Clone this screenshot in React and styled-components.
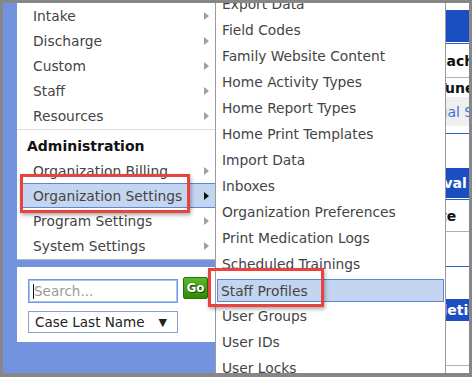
import React from 'react';
import styled, { createGlobalStyle } from 'styled-components';

const GlobalStyle = createGlobalStyle`
  html, body { margin: 0; padding: 0; background: #878787; }
  body { font-family: "DejaVu Sans", Verdana, sans-serif; }
`;

const mainItems = ['Intake', 'Discharge', 'Custom', 'Staff', 'Resources'];
const adminItems = ['Organization Billing', 'Organization Settings', 'Program Settings', 'System Settings'];
const subItems = [
  'Export Data', 'Field Codes', 'Family Website Content', 'Home Activity Types',
  'Home Report Types', 'Home Print Templates', 'Import Data', 'Inboxes',
  'Organization Preferences', 'Print Medication Logs', 'Scheduled Trainings',
  'Staff Profiles', 'User Groups', 'User IDs', 'User Locks',
];

function App () {
  return (
    <>
      <GlobalStyle />
      <Frame>
        <Inner>
          <Sidebar>
            <Menu>
              {mainItems.map(item => (
                <MenuItem key={item}>
                  <span>{item}</span>
                  <Arrow />
                </MenuItem>
              ))}
              <Separator />
              <MenuHeading>Administration</MenuHeading>
              {adminItems.map(item => (
                <MenuItem key={item} $active={item === 'Organization Settings'}>
                  <span>{item}</span>
                  <Arrow $active={item === 'Organization Settings'} />
                </MenuItem>
              ))}
            </Menu>

            <SearchPanel>
              <SearchRow>
                <SearchField>
                  <SearchInput placeholder="Search..." />
                </SearchField>
                <GoButton>Go</GoButton>
              </SearchRow>
              <SelectBox>
                <span>Case Last Name</span>
                <span>▼</span>
              </SelectBox>
            </SearchPanel>
          </Sidebar>

          <Content>
            <Spacer $h={7} />
            <HeaderBar $h={32} />
            <BlueLine />
            <Cell $h={33} $bold>Each</Cell>
            <GrayLine />
            <Cell $h={19} $bold>Tuner</Cell>
            <LinkCell $shift={-28}>Manual Services</LinkCell>
            <Spacer $h={6} />
            <BlueLine />
            <Spacer $h={34} />
            <HeaderBar $h={30} $shift={-41}>Approval</HeaderBar>
            <BlueLine />
            <Cell $h={31} $bold $shift={-18}>Date</Cell>
            <GrayLine />
            <Spacer $h={33} />
            <BlueLine />
            <Spacer $h={32} />
            <HeaderBar $h={22} $shift={-39}>Completion</HeaderBar>
            <Spacer $h={44} />
            <GrayLine />
          </Content>

          <SubMenu>
            {subItems.map(item => (
              <SubItem key={item} $active={item === 'Staff Profiles'}>{item}</SubItem>
            ))}
          </SubMenu>

          <Callout $left={17} $top={171} $w={170} $h={39} />
          <Callout $left={205} $top={265} $w={116} $h={39} />
        </Inner>
      </Frame>
    </>
  );
}

export default App;

const Frame = styled.div`
  width: 472px;
  height: 377px;
  box-sizing: border-box;
  border-style: solid;
  border-color: #878787;
  border-width: 3px 3px 4px 3px;
  background: #878787;
`;

const Inner = styled.div`
  position: relative;
  display: flex;
  height: 100%;
  overflow: hidden;
  background: #fff;
`;

const Sidebar = styled.div`
  width: 227px;
  flex-shrink: 0;
  background: #7393e0;
  padding-left: 14px;
  box-sizing: border-box;
  display: flex;
  flex-direction: column;
`;

const Menu = styled.div`
  width: 198px;
  background: #fff;
  border-bottom: 1px solid #b8b8b8;
  padding-bottom: 1px;
`;

const MenuItem = styled.div`
  height: 25px;
  box-sizing: border-box;
  display: flex;
  align-items: center;
  justify-content: space-between;
  padding: 0 6px 0 16px;
  font-size: 13.8px;
  color: #444;
  margin-left: ${p => (p.$active ? '3px' : '0')};
  padding-left: ${p => (p.$active ? '13px' : '16px')};
  background: ${p => (p.$active ? '#c4d5ef' : 'transparent')};
  border-top: 1px solid ${p => (p.$active ? '#5d86d6' : 'transparent')};
  border-bottom: 1px solid ${p => (p.$active ? '#5d86d6' : 'transparent')};
`;

const Arrow = styled.span`
  width: 0;
  height: 0;
  border-top: 4px solid transparent;
  border-bottom: 4px solid transparent;
  border-left: 5px solid ${p => (p.$active ? '#111' : '#a0a0a0')};
`;

const Separator = styled.div`
  height: 1px;
  margin-top: 1px;
  background: #dcdcdc;
`;

const MenuHeading = styled.div`
  height: 28px;
  padding: 4px 0 0 10px;
  box-sizing: border-box;
  display: flex;
  align-items: center;
  font-size: 14px;
  font-weight: bold;
  color: #111;
`;

const SearchPanel = styled.div`
  margin-top: 7px;
  background: #fff;
  height: 75px;
  box-sizing: border-box;
  padding: 12px 0 0 11px;
  display: flex;
  flex-direction: column;
  gap: 8px;
`;

const SearchRow = styled.div`
  display: flex;
  align-items: flex-start;
  gap: 5px;
`;

const SearchField = styled.div`
  position: relative;

  &::after {
    content: "";
    position: absolute;
    left: 5px;
    top: 5px;
    width: 1px;
    height: 15px;
    background: #111;
  }
`;

const SearchInput = styled.input`
  display: block;
  width: 150px;
  height: 24px;
  box-sizing: border-box;
  border: 1px solid #6f9be6;
  box-shadow: inset 0 0 0 1px #a9c4f0;
  outline: none;
  padding: 0 5px;
  font-family: "DejaVu Sans", Verdana, sans-serif;
  font-size: 13.5px;
  color: #333;
  &::placeholder { color: #9a9a9a; }
`;

const GoButton = styled.button`
  width: 25px;
  height: 22px;
  margin-top: -2px;
  padding: 0;
  box-sizing: border-box;
  border: 1px solid #2e6f06;
  border-radius: 2px;
  background: linear-gradient(#58bb2c, #2f8a08);
  color: #fff;
  font-family: "DejaVu Sans", Verdana, sans-serif;
  font-size: 12px;
  font-weight: bold;
  text-shadow: 0 0 1px #0c3a00, 1px 1px 0 #1a4a00;
`;

const SelectBox = styled.div`
  width: 150px;
  height: 22px;
  box-sizing: border-box;
  border: 1px solid #8aa0c2;
  display: flex;
  align-items: center;
  justify-content: space-between;
  padding: 0 10px 0 6px;
  font-size: 13.5px;
  color: #222;

  span:last-child {
    font-size: 11px;
  }
`;

const Content = styled.div`
  flex: 1;
  display: flex;
  flex-direction: column;
  padding-left: 207px;
  background: #fff;
  white-space: nowrap;
  overflow: hidden;
`;

const Spacer = styled.div`
  height: ${p => p.$h}px;
  flex-shrink: 0;
`;

const HeaderBar = styled.div`
  height: ${p => p.$h}px;
  flex-shrink: 0;
  background: #1b4ec0;
  color: #fff;
  font-weight: bold;
  font-size: 14px;
  display: flex;
  align-items: center;
  text-indent: ${p => p.$shift || 0}px;
`;

const BlueLine = styled.div`
  height: 1px;
  margin-top: 1px;
  flex-shrink: 0;
  background: #2f5fc8;
`;

const GrayLine = styled.div`
  height: 1px;
  flex-shrink: 0;
  background: #b0b0b0;
`;

const Cell = styled.div`
  height: ${p => p.$h}px;
  flex-shrink: 0;
  display: flex;
  align-items: center;
  font-size: 14px;
  font-weight: ${p => (p.$bold ? 'bold' : 'normal')};
  color: #111;
  text-indent: ${p => p.$shift || 0}px;
`;

const LinkCell = styled.div`
  height: 29px;
  flex-shrink: 0;
  background: #efefef;
  color: #3e6fd6;
  font-size: 14px;
  display: flex;
  align-items: center;
  text-indent: ${p => p.$shift || 0}px;
`;

const SubMenu = styled.div`
  position: absolute;
  left: 212px;
  top: -12px;
  width: 231px;
  box-sizing: border-box;
  background: #fff;
  border-left: 1px solid #9a9a9a;
  border-right: 1px solid #9a9a9a;
`;

const SubItem = styled.div`
  box-sizing: border-box;
  display: flex;
  align-items: center;
  font-size: 13.8px;
  color: #444;
  padding-left: ${p => (p.$active ? '3px' : '5px')};
  margin: ${p => (p.$active ? '2px 1px 1px 1px' : '0')};
  height: ${p => (p.$active ? '23px' : '26px')};
  background: ${p => (p.$active ? '#c4d5ef' : 'transparent')};
  border: 1px solid ${p => (p.$active ? '#5d86d6' : 'transparent')};
`;

const Callout = styled.div`
  position: absolute;
  left: ${p => p.$left}px;
  top: ${p => p.$top}px;
  width: ${p => p.$w}px;
  height: ${p => p.$h}px;
  box-sizing: border-box;
  border: 3px solid #e8433e;
  box-shadow: 1px 2px 4px rgba(0, 0, 0, 0.35);
  pointer-events: none;
`;
